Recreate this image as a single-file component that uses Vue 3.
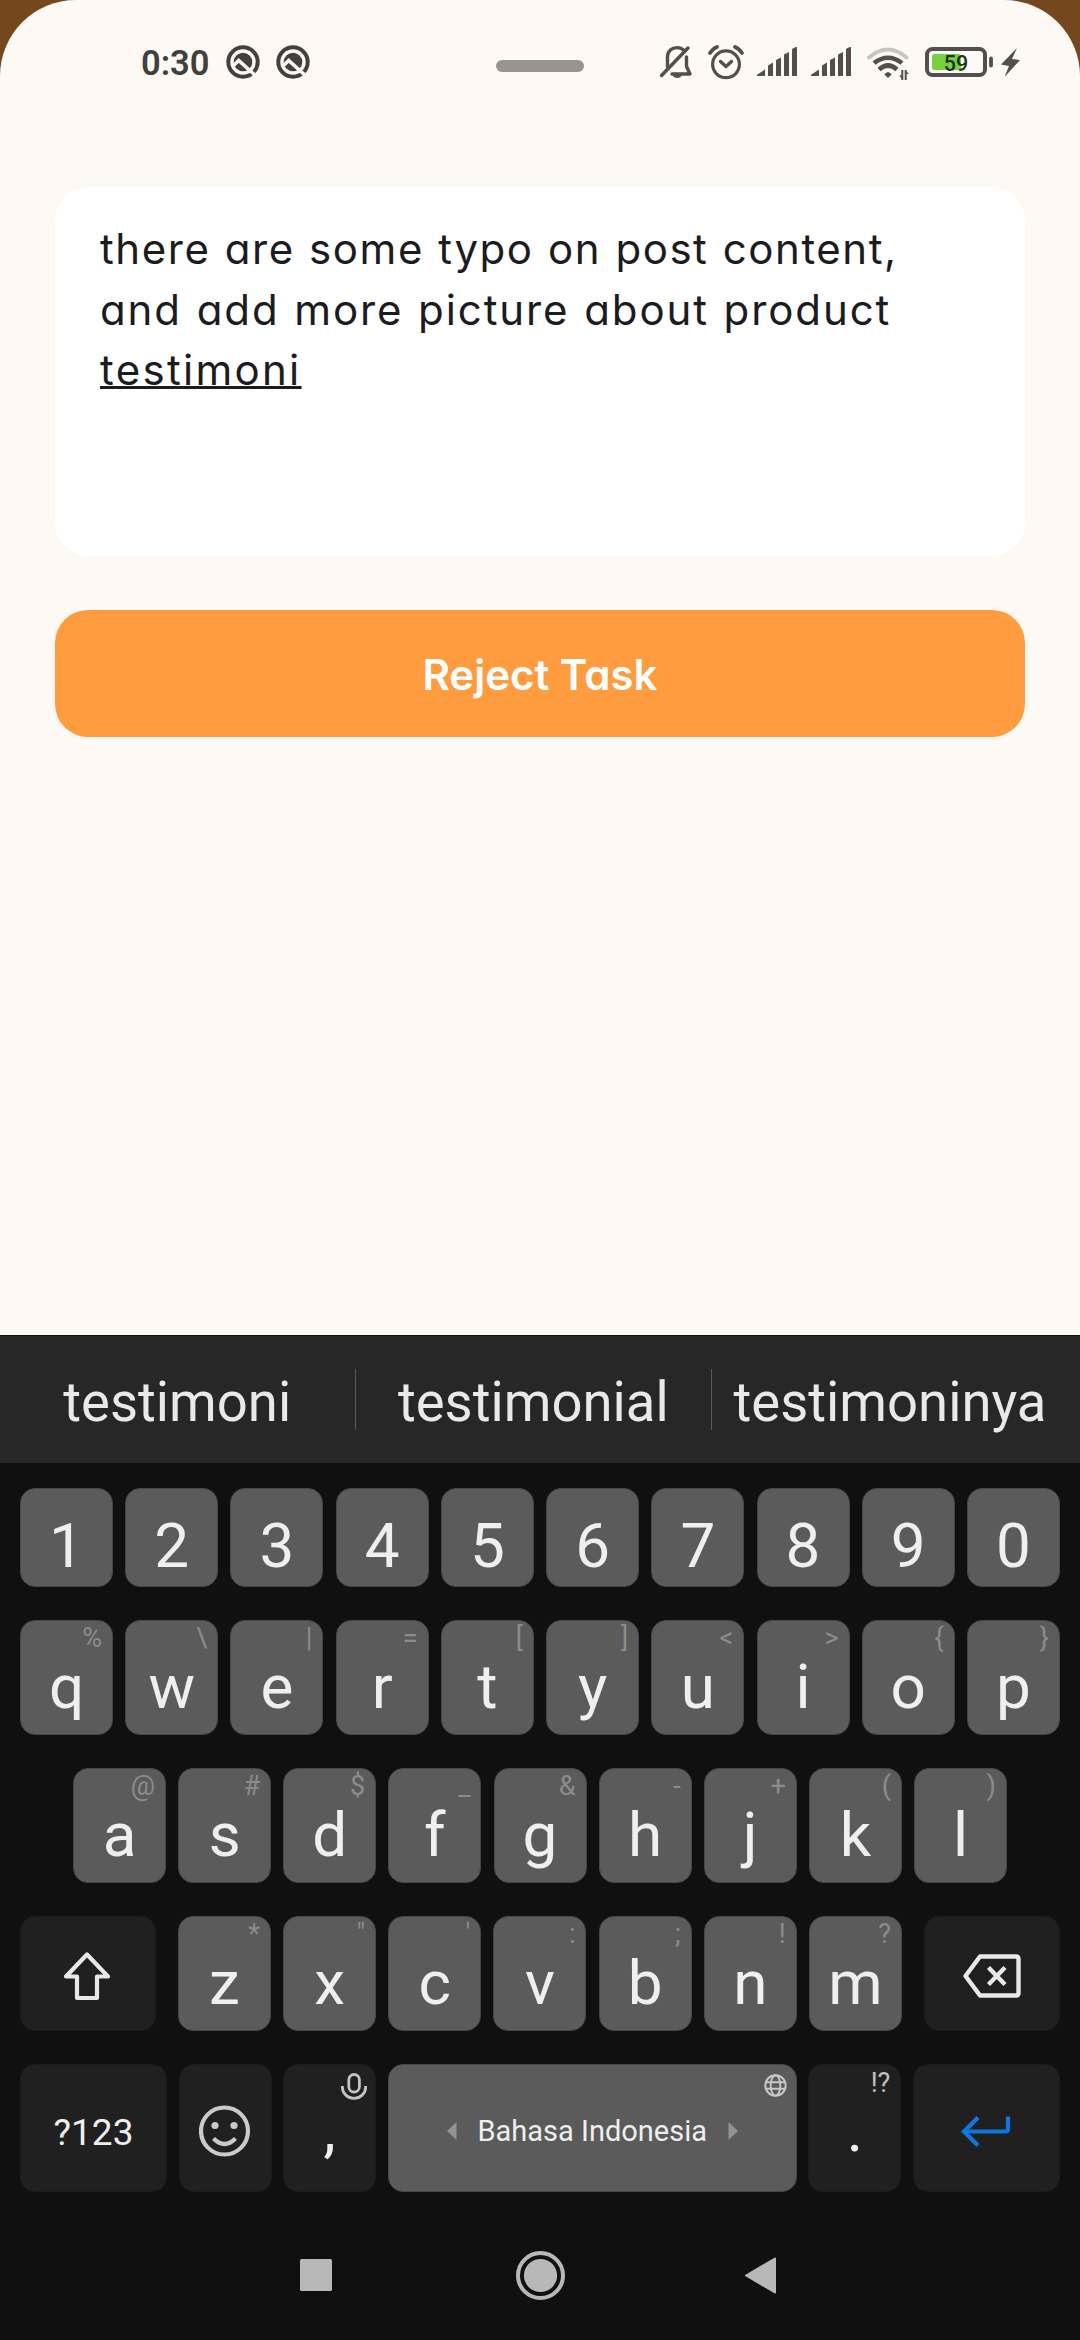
<script setup>
const noteLines = [
  'there are some typo on post content,',
  'and add more picture about product',
]
const suggestions = ['testimoni', 'testimonial', 'testimoninya']
const pair = (chars, hints) => [...chars].map((c, i) => ({ c, hint: hints[i] }))
const digits = [...'1234567890']
const rowTop = pair('qwertyuiop', '%\\|=[]<>{}')
const rowHome = pair('asdfghjkl', '@#$_&-+()')
const rowBottom = pair('zxcvbnm', '*"\':;!?')
</script>

<template>
  <div class="screen">
    <div class="app">
      <header class="status">
        <span class="clock">0:30</span>
        <svg v-for="n in 2" :key="n" class="notif" width="34" height="34" viewBox="-17 -17 34 34">
          <circle r="14.7" fill="none" stroke="#41413f" stroke-width="4" />
          <circle r="9.3" fill="#41413f" />
          <path d="M-9.5 3.5L-4.3 -1.6L14 15" fill="none" stroke="#fff9f5" stroke-width="3.6" />
        </svg>
        <span class="pill"></span>
        <svg class="tray" width="366" height="40" viewBox="657 42 366 40" fill="none" stroke="#50504d" stroke-width="3.4">
          <g stroke-linecap="round" stroke-linejoin="round">
            <path d="M667.5 67V57C667.5 51 672 47.6 677 47.6C679.500 47.600 682 48.500 683.500 50" />
            <path d="M686.500 57V66.500L690 74H672" />
            <path d="M661.500 75.500L688 48" />
          </g>
          <path d="M672.500 75H682C681 79 673.500 79 672.500 75Z" fill="#50504d" stroke="none" />
          <circle cx="726" cy="64.300" r="13.400" stroke-width="3.200" />
          <path d="M720.500 61.500L726 66.500L731.500 61.500" stroke-linecap="round" stroke-linejoin="round" />
          <path d="M710 53Q713 48.500 717 47M742 53Q739 48.500 735 47" stroke-width="3.800" stroke-linecap="round" />
          <g fill="#50504d" stroke="none">
            <path d="M757 76V74.700L765 69.500V76ZM768 76V65.500L773 62.500V76ZM776 76V60L781 57.500V76ZM784 76V54.500L789 52V76ZM792 76V49.500Q793 47.500 797 47V76Z" />
            <path transform="translate(54)" d="M757 76V74.700L765 69.500V76ZM768 76V65.500L773 62.500V76ZM776 76V60L781 57.500V76ZM784 76V54.500L789 52V76ZM792 76V49.500Q793 47.500 797 47V76Z" />
          </g>
          <path d="M869 57.500Q888 41.500 906.500 57.500" stroke="#c9c4c0" stroke-width="4" stroke-linecap="round" />
          <path d="M874 63Q888 52.500 902 63" stroke-width="4.600" />
          <path d="M879 69.500Q888 61.500 897 69.500" stroke-width="4.600" />
          <path d="M884.300 74.500Q888 69.500 891.700 74.500L888 78Z" fill="#50504d" stroke="none" />
          <path d="M902.300 70V80M905.700 70V80" stroke-width="2" />
          <path d="M902 75.500L899 75.500L902 79ZM906 74L909 74L906 71Z" fill="#50504d" stroke="none" />
          <rect x="927" y="49" width="58" height="26" rx="5.500" stroke-width="4" />
          <rect x="932" y="54" width="29" height="16" rx="2.500" fill="#77d042" stroke="none" />
          <path d="M991 58.500V65.500" stroke-width="3.800" stroke-linecap="round" />
          <text x="956" y="70.700" text-anchor="middle" class="level">59</text>
          <path d="M1017 48L1001 64.500L1009 66L1004.500 77L1020 60L1012 59Z" fill="#50504d" stroke="none" />
        </svg>
      </header>
      <section class="note">
        <p v-for="(line, i) in noteLines" :key="line" :class="'line-' + (i + 1)">{{ line }}</p>
        <p class="composing"><span>testimoni</span></p>
      </section>
      <button class="reject">Reject Task</button>
    </div>

    <div class="keyboard">
      <div class="suggest">
        <span v-for="s in suggestions" :key="s"><b>{{ s }}</b></span>
      </div>
      <div class="keys">
        <div class="row num">
          <div v-for="d in digits" :key="d" class="key">{{ d }}</div>
        </div>
        <div class="row">
          <div v-for="k in rowTop" :key="k.c" class="key">{{ k.c }}<i>{{ k.hint }}</i></div>
        </div>
        <div class="row home">
          <div v-for="k in rowHome" :key="k.c" class="key">{{ k.c }}<i>{{ k.hint }}</i></div>
        </div>
        <div class="row lower">
          <div class="key dark mod shift">
            <svg width="50" height="50" viewBox="0 0 50 50" fill="none" stroke="#e8e8e8" stroke-width="4.200" stroke-linejoin="round">
              <path d="M25 3.500L46 25.500H35V47H15V25.500H4Z" />
            </svg>
          </div>
          <div class="letters">
            <div v-for="k in rowBottom" :key="k.c" class="key">{{ k.c }}<i>{{ k.hint }}</i></div>
          </div>
          <div class="key dark mod">
            <svg width="58" height="44" viewBox="0 0 58 44" fill="none" stroke="#e8e8e8" stroke-width="4.400" stroke-linejoin="round">
              <path d="M17 2.500H53Q55.500 2.500 55.500 5V39Q55.500 41.500 53 41.500H17L2.500 22Z" />
              <path d="M25.500 13.500L42 30.500M42 13.500L25.500 30.500" />
            </svg>
          </div>
        </div>
        <div class="row space-row">
          <div class="key dark wide sym">?123</div>
          <div class="key dark icon">
            <svg width="52" height="52" viewBox="0 0 52 52" fill="none" stroke="#cacaca" stroke-width="4.200">
              <circle cx="25.500" cy="26" r="23.500" />
              <circle cx="16" cy="20.500" r="3.600" fill="#cacaca" stroke="none" />
              <circle cx="35" cy="20.500" r="3.600" fill="#cacaca" stroke="none" />
              <path d="M14.500 33.500Q25.500 44.500 36.500 33.500" />
            </svg>
          </div>
          <div class="key dark punct">,
            <svg class="mic" width="26" height="27" viewBox="0 0 26 27" fill="none" stroke="#c4c4c4" stroke-width="2.800">
              <rect x="7.800" y="1.500" width="10.600" height="17.500" rx="5.300" />
              <path d="M1.400 13V14.500A11.600 10.800 0 0 0 24.600 14.500V13" />
            </svg>
          </div>
          <div class="key space">
            <svg width="10" height="18" viewBox="0 0 10 18"><path d="M9.500 0V18L0 9Z" fill="#939393" /></svg>
            <span>Bahasa Indonesia</span>
            <svg width="10" height="18" viewBox="0 0 10 18"><path d="M.5 0V18L10 9Z" fill="#939393" /></svg>
            <svg class="globe" width="23" height="23" viewBox="0 0 23 23" fill="none" stroke="#c8c8c8" stroke-width="1.900">
              <circle cx="11.500" cy="11.500" r="10.200" />
              <ellipse cx="11.500" cy="11.500" rx="4.800" ry="10.200" />
              <path d="M1.800 8.200H21.200M1.800 14.800H21.200" />
            </svg>
          </div>
          <div class="key dark punct">.<i>!?</i></div>
          <div class="key dark wide icon">
            <svg width="50" height="31" viewBox="0 0 50 31" fill="none" stroke="#0f76e0" stroke-width="4.200">
              <path d="M47 .5V13Q47 15.500 44.500 15.500H3M17 1.500L3 15.500L17 29.500" />
            </svg>
          </div>
        </div>
      </div>
      <nav class="nav">
        <svg width="480" height="50" viewBox="298 2251 480 50" fill="#b8b8b8">
          <rect x="300" y="2259" width="32" height="32" rx="1.500" />
          <circle cx="540.500" cy="2275.500" r="22.500" fill="none" stroke="#b8b8b8" stroke-width="4" />
          <circle cx="540.500" cy="2275.500" r="16.600" />
          <path d="M746 2275.500L775 2258.500V2292.500Z" stroke="#b8b8b8" stroke-width="2" stroke-linejoin="round" />
        </svg>
      </nav>
    </div>
  </div>
</template>

<style>
body { background: #75471c; }
</style>

<style scoped>
.screen {
  width: 1080px;
  height: 2340px;
  display: flex;
  flex-direction: column;
  background: #75471c;
  font-family: Roboto, "Noto Sans", sans-serif;
  overflow: hidden;
}
.app {
  height: 1335px;
  box-sizing: border-box;
  padding: 0 55px;
  background: #fff9f5;
  border-radius: 76px 76px 0 0;
}
.status {
  height: 187px;
  box-sizing: border-box;
  padding: 42px 0 0 86px;
  display: flex;
  align-items: flex-start;
}
.clock {
  width: 70px;
  margin-top: 1px;
  font-size: 34.500px;
  line-height: 40px;
  font-weight: 600;
  color: #3f3f3d;
  white-space: nowrap;
}
.notif { margin: 3px 0 0 15px; }
.notif + .notif { margin-left: 16px; }
.pill {
  width: 88px;
  height: 12px;
  margin: 18px 0 0 186px;
  border-radius: 6px;
  background: #999490;
}
.tray { margin-left: 73px; flex: none; }
.level {
  font: 500 21.500px Roboto, sans-serif;
  fill: #20301a;
  stroke: none;
}
.note {
  height: 369px;
  box-sizing: border-box;
  padding: 32px 45px;
  border-radius: 33px;
  background: #fff;
  color: #1c1b1f;
  font-family: Inter, sans-serif;
  font-feature-settings: "cv11";
  font-size: 42px;
  line-height: 60.500px;
}
.note p { margin: 0; white-space: nowrap; }
.line-1 { letter-spacing: 1.550px; word-spacing: 1px; }
.line-2 { letter-spacing: 1.900px; word-spacing: 1px; }
.composing { letter-spacing: 2.300px; }
.composing span {
  text-decoration: underline;
  text-decoration-thickness: 2.500px;
  text-underline-offset: 1px;
  text-decoration-skip-ink: none;
}
.reject {
  display: flex;
  justify-content: center;
  align-items: center;
  width: 970px;
  height: 126.500px;
  margin-top: 54.300px;
  padding: 1px 0 0;
  border: 0;
  border-radius: 33px;
  background: #ff9c40;
  color: #fff;
  font-family: Inter, sans-serif;
  font-feature-settings: "cv11";
  font-size: 42px;
  font-weight: 600;
}
.keyboard {
  height: 1005px;
  box-sizing: border-box;
  border-top: 1px solid #0e0e0e;
  background: #101010;
  color: #efefef;
}
.suggest {
  height: 127px;
  display: flex;
  align-items: center;
  background: #272727;
}
.suggest span {
  width: 355px;
  height: 61px;
  display: flex;
  align-items: center;
  justify-content: center;
  border-right: 1px solid #5a5a5a;
  font-size: 56px;
  line-height: 61px;
  color: #e9e9e9;
}
.suggest span:last-child { border-right: 0; }
.suggest b {
  font-weight: 400;
  padding-top: 6px;
  transform: scaleX(.972);
}
.keys {
  padding: 25px 20px 0;
  display: flex;
  flex-direction: column;
  gap: 33px;
}
.row {
  height: 115px;
  display: flex;
  justify-content: space-between;
}
.home { padding: 0 53px; }
.letters {
  width: 724px;
  display: flex;
  justify-content: space-between;
}
.key {
  position: relative;
  width: 93px;
  box-sizing: border-box;
  padding-top: 18px;
  display: flex;
  align-items: center;
  justify-content: center;
  border: 1px solid #474747;
  border-radius: 15px;
  background: #5b5b5b;
  font-size: 62px;
  line-height: 62px;
}
.num { height: 99px; }
.num .key { padding-top: 16px; }
.key i {
  position: absolute;
  top: 4px;
  right: 10px;
  font-size: 27px;
  line-height: 27px;
  font-style: normal;
  color: #8c8c8c;
}
.dark { background: #202020; border-color: #1c1c1c; }
.mod { width: 136px; padding-top: 4px; }
.shift { padding-right: 2px; }
.space-row { height: 128px; }
.wide { width: 147px; }
.sym { font-size: 37px; line-height: 37px; padding-top: 9px; }
.icon { padding-top: 6px; }
.punct { padding-top: 3px; }
.dark i { color: #c0c0c0; top: 5px; }
.mic { position: absolute; top: 8px; right: 8px; }
.space {
  width: 409px;
  padding-top: 6px;
  gap: 21px;
  font-size: 29px;
  line-height: 29px;
}
.globe { position: absolute; top: 9px; right: 9px; }
.nav {
  display: flex;
  justify-content: center;
  padding: 59px 4px 0 0;
}
</style>
